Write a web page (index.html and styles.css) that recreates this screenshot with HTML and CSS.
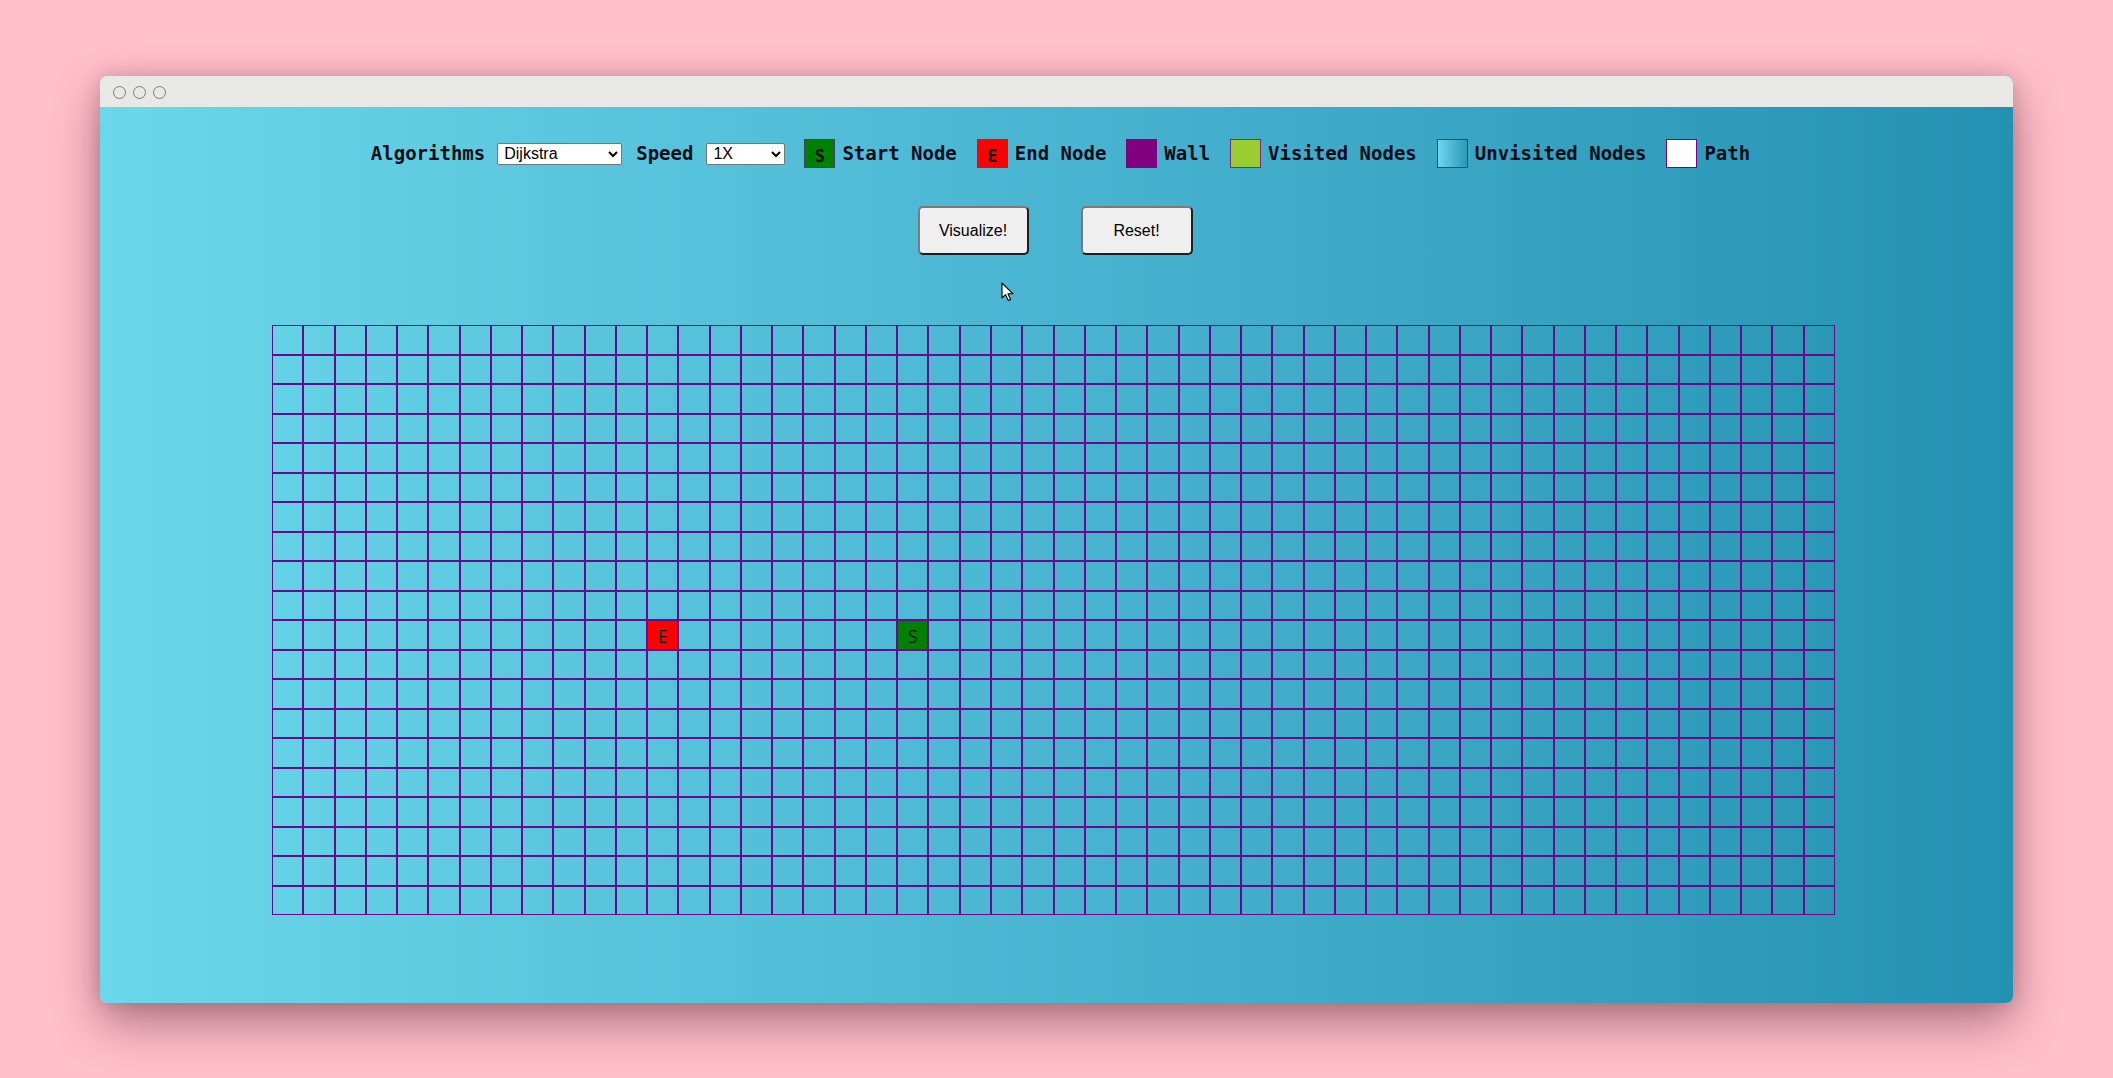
FILE: index.html
```html
<!DOCTYPE html>
<html>
<head>
<meta charset="utf-8">
<title>Pathfinding Visualizer</title>
<link rel="stylesheet" href="styles.css">
</head>
<body>
<div class="window">
  <div class="titlebar">
    <span class="dot"></span><span class="dot"></span><span class="dot"></span>
  </div>
  <div class="content">
    <div class="toolbar">
      <span class="label lbl-algo">Algorithms</span>
      <select class="sel sel-algo"><option>Dijkstra</option><option>A*</option><option>BFS</option><option>DFS</option></select>
      <span class="label lbl-speed">Speed</span>
      <select class="sel sel-speed"><option>1X</option><option>2X</option><option>4X</option></select>
      <div class="legend">
        <span class="box box-start">S</span><span class="label">Start Node</span>
      </div>
      <div class="legend">
        <span class="box box-end">E</span><span class="label">End Node</span>
      </div>
      <div class="legend">
        <span class="box box-wall"></span><span class="label">Wall</span>
      </div>
      <div class="legend">
        <span class="box box-visited"></span><span class="label">Visited Nodes</span>
      </div>
      <div class="legend">
        <span class="box box-unvisited"></span><span class="label">Unvisited Nodes</span>
      </div>
      <div class="legend">
        <span class="box box-path"></span><span class="label">Path</span>
      </div>
    </div>
    <div class="buttons">
      <button class="btn btn-vis">Visualize!</button>
      <button class="btn btn-reset">Reset!</button>
    </div>
    <div class="grid" id="grid"></div>
  </div>
  <svg class="cursor" width="14" height="21" viewBox="0 0 14 21">
    <path d="M1 1 L1 16 L4.6 12.6 L7.2 18.6 L9.6 17.6 L7 11.8 L12 11.8 Z" fill="#fff" stroke="#000" stroke-width="1.1" stroke-linejoin="round"/>
  </svg>
</div>
<script src="script.js"></script>
</body>
</html>
```

FILE: styles.css
```css
* { box-sizing: border-box; }
html, body { margin: 0; padding: 0; }
body {
  background: #ffc0cb;
  width: 2113px;
  height: 1078px;
  display: flex;
  align-items: center;
  justify-content: center;
  overflow: hidden;
}
.window {
  position: relative;
  width: 1913px;
  height: 927px;
  margin-top: 1px;
  border-radius: 7px;
  overflow: hidden;
  background: linear-gradient(90deg, #6ad8ea 0%, #4db8d4 45%, #2391b1 100%);
  box-shadow: 0 20px 48px rgba(70, 10, 30, 0.42), 0 0 20px rgba(70, 10, 30, 0.18);
}
.titlebar {
  height: 31px;
  background: #e8e8e6;
  display: flex;
  align-items: center;
  padding-left: 13px;
  padding-top: 1px;
  gap: 7px;
}
.dot {
  width: 13px;
  height: 13px;
  border-radius: 50%;
  border: 1.5px solid #7c7c7c;
}
.content {
  display: flex;
  flex-direction: column;
}
.toolbar {
  margin-top: 32px;
  height: 29px;
  display: flex;
  align-items: center;
  justify-content: center;
  padding-left: 8px;
}
.label {
  font-family: "DejaVu Sans Mono", "Liberation Mono", monospace;
  font-weight: bold;
  font-size: 19px;
  color: #0d0d1a;
  white-space: pre;
  line-height: 1;
}
.lbl-algo { margin-right: 12px; }
.lbl-speed { margin-right: 13px; }
.sel {
  font-family: "Liberation Sans", Arial, sans-serif;
  font-size: 16px;
  height: 22px;
  background: #fff;
  color: #000;
  border: 1px solid #767676;
  border-radius: 2px;
  padding: 0 2px;
}
.sel-algo { width: 125px; margin-right: 14px; }
.sel-speed { width: 79px; margin-right: 19px; }
.legend {
  display: flex;
  align-items: center;
  gap: 7px;
  margin-right: 20px;
}
.legend:last-child { margin-right: 0; }
.box {
  width: 31px;
  height: 29px;
  border: 1px solid #5a2a86;
  display: flex;
  align-items: center;
  justify-content: center;
  padding-top: 4px;
  font-family: "DejaVu Sans Mono", monospace;
  font-weight: bold;
  font-size: 17px;
  color: #111;
}
.box-start { background: #007f00; border-color: #4b3b6b; }
.box-end { background: #ff0000; border-color: #7a2a80; }
.box-wall { background: #800080; border-color: #800080; }
.box-visited { background: #9acd32; border-color: #7a2a80; }
.box-unvisited { background: linear-gradient(90deg, #6fd6ee, #2a98b6); border-color: #5a2aa0; }
.box-path { background: #fff; border-color: #800080; }
.buttons {
  margin-top: 38px;
  display: flex;
  justify-content: center;
  gap: 52px;
  padding-right: 3px;
}
.btn {
  height: 49px;
  background: #efefef;
  border: 2px solid;
  border-color: #7a7a7a #1e1e1e #1e1e1e #7a7a7a;
  border-radius: 5px;
  font-family: "Liberation Sans", Arial, sans-serif;
  font-size: 16px;
  color: #000;
  padding: 0;
}
.btn-vis { width: 111px; }
.btn-reset { width: 112px; }
.grid {
  margin-top: 70px;
  margin-left: 172px;
  width: 1563px;
  height: 590px;
  display: grid;
  grid-template-columns: repeat(50, 1fr);
  grid-template-rows: repeat(20, 1fr);
}
.cell {
  border: 1px solid #680a8c;
  display: flex;
  align-items: center;
  justify-content: center;
  font-family: "Open Sans", "DejaVu Sans", sans-serif;
  font-size: 18px;
  color: #1a1a1a;
  padding-top: 2px;
}
.cell-end { background: #ff0000; }
.cell-start { background: #008000; }
.cursor {
  position: absolute;
  left: 901px;
  top: 206px;
}
```

FILE: script.js
```js
(function () {
  var grid = document.getElementById('grid');
  var rows = 20, cols = 50;
  for (var r = 0; r < rows; r++) {
    for (var c = 0; c < cols; c++) {
      var d = document.createElement('div');
      d.className = 'cell';
      if (r === 10 && c === 12) { d.className += ' cell-end'; d.textContent = 'E'; }
      if (r === 10 && c === 20) { d.className += ' cell-start'; d.textContent = 'S'; }
      grid.appendChild(d);
    }
  }
})();
```
